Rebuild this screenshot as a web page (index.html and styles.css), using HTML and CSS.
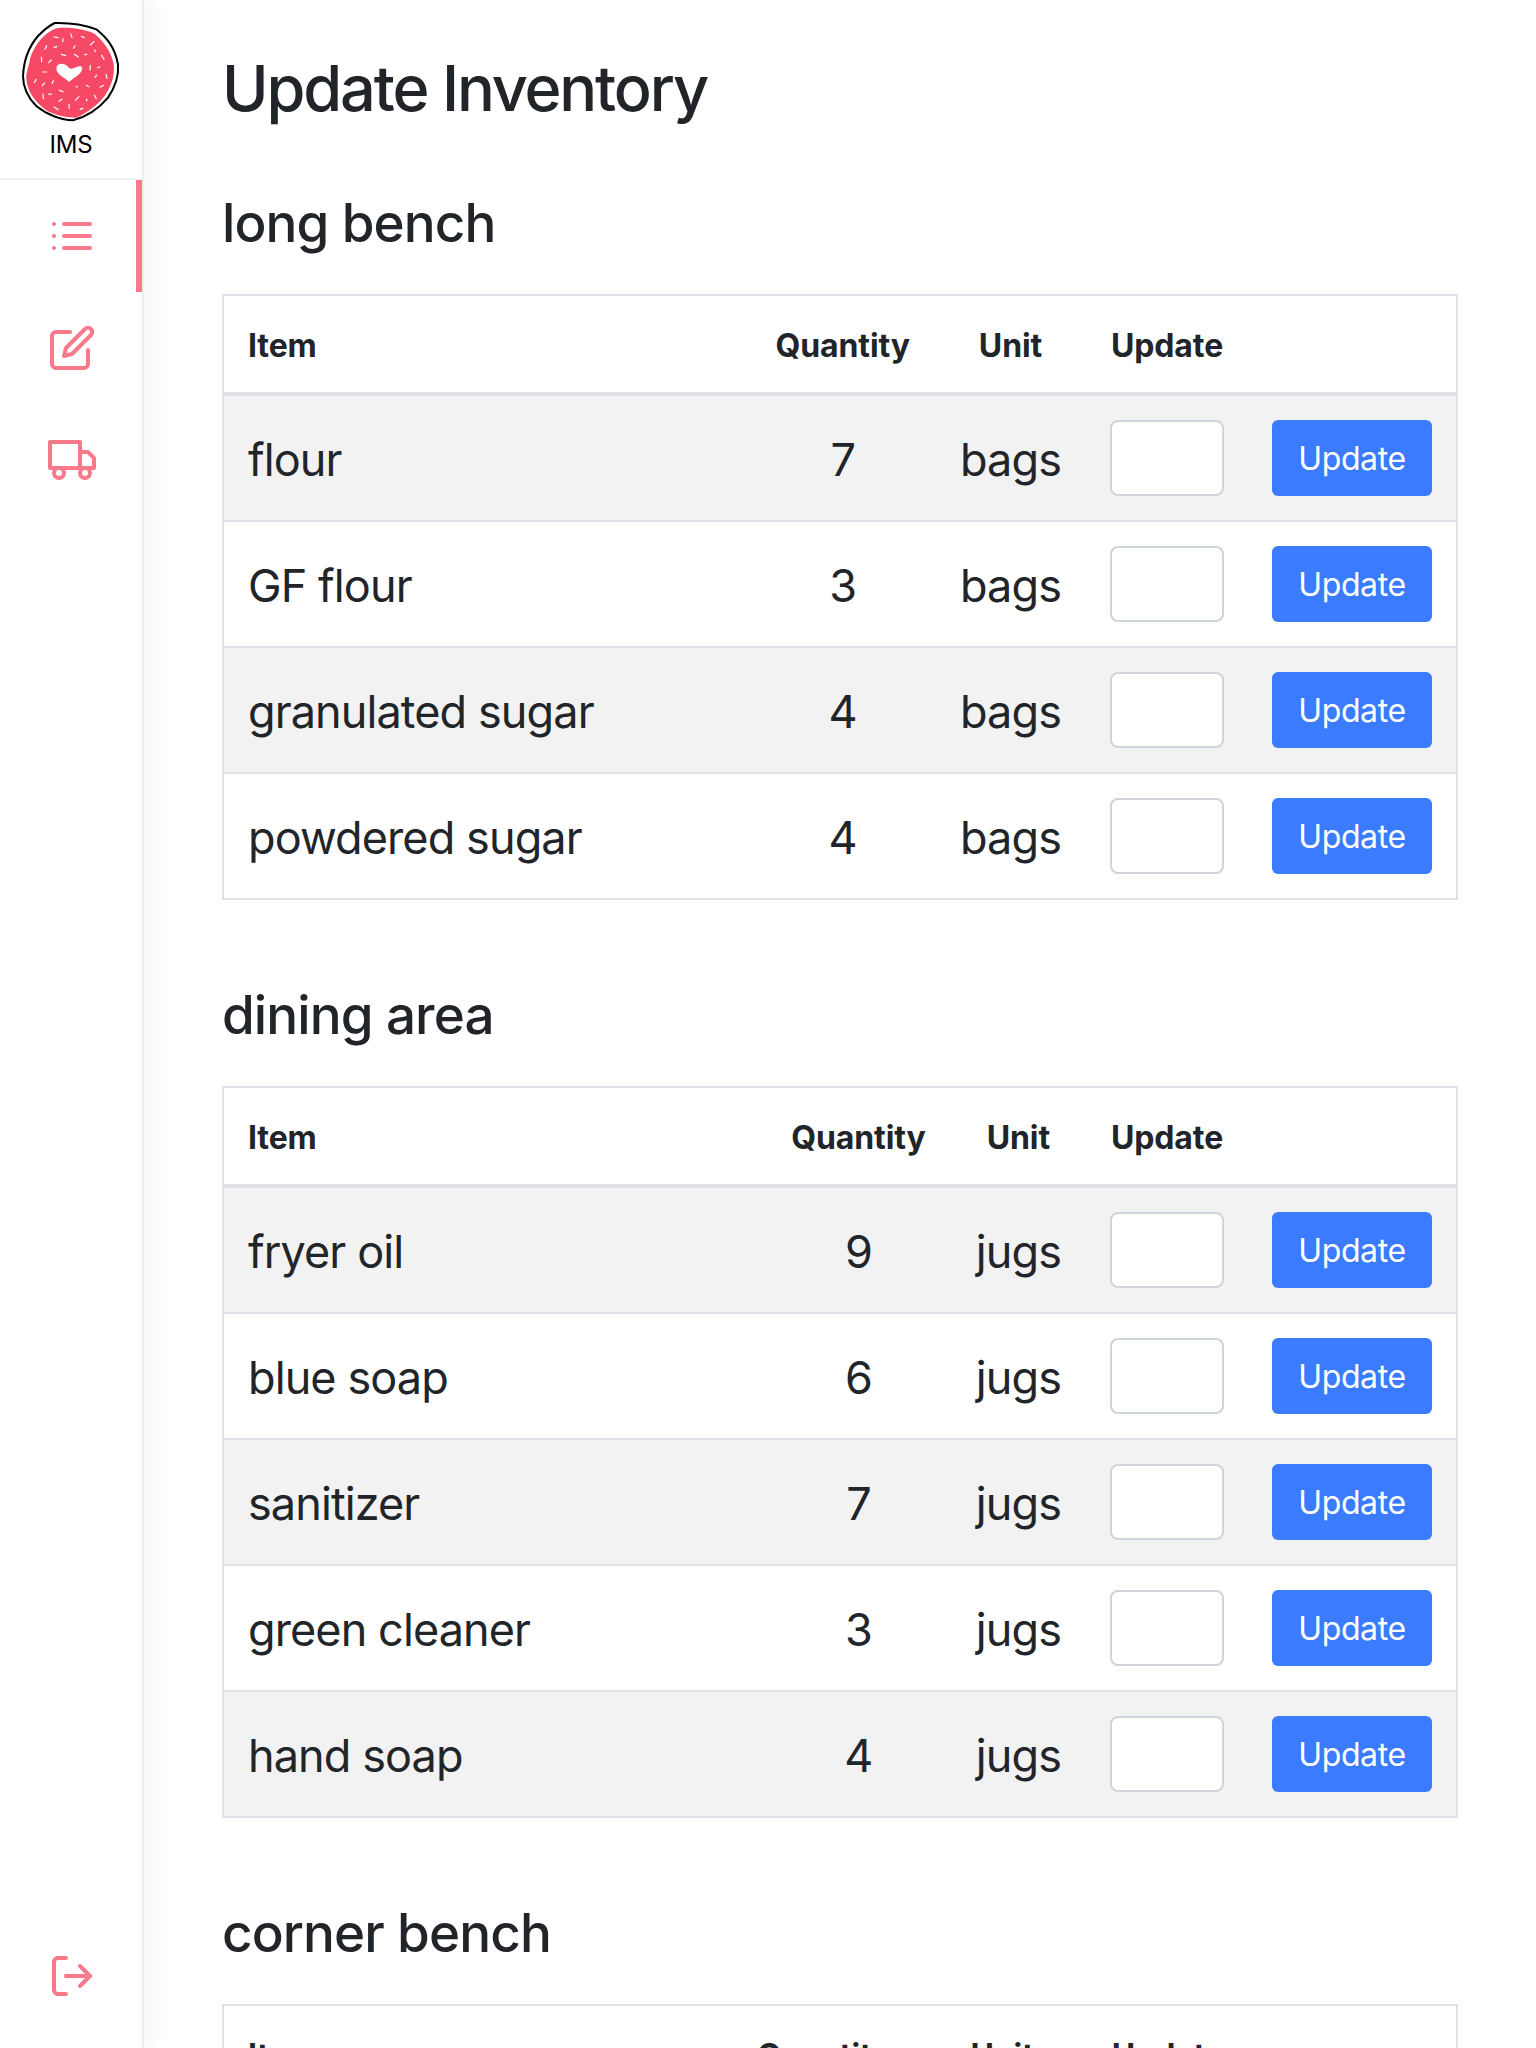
FILE: index.html
```html
<!DOCTYPE html>
<html lang="en">
<head>
    <meta charset="UTF-8">
    <meta name="viewport" content="width=device-width, initial-scale=1.0">
    <title>Update Inventory</title>
    <link rel="stylesheet" href="styles.css">
</head>
<body>
    <nav class="sidebar">
        <div class="brand">
            <svg class="logo" viewBox="64 60 300 306" xmlns="http://www.w3.org/2000/svg">
                <path class="logo-ring" d="M165 66 C200 65 250 70 290 85 C320 110 345 135 355 190 C358 225 345 260 325 290 C300 320 270 345 220 358 C185 358 140 340 110 315 C85 290 70 260 70 225 C72 180 85 140 115 105 C130 90 145 75 165 66 Z"/>
                <path class="logo-dough" d="M170 82 C200 78 250 82 285 98 C310 120 335 150 342 190 C346 225 335 255 315 285 C295 310 265 335 230 350 C205 350 165 345 135 325 C105 300 85 275 80 235 C78 215 90 190 92 170 C105 130 135 95 170 82 Z"/>
                <g class="logo-sprinkles">
                    <path d="M163 108L175 110M213 98L217 110M245 106L254 110M190 113L189 122M272 132L283 122M136 145L141 134M163 139L172 137M222 142L226 134M285 147L287 152M185 160L198 164M224 160L236 168M255 161L261 160M306 163L313 175M125 168L126 182M147 185L155 177M272 193L271 207M294 200L301 198M130 213L141 213M319 220L322 232M286 229L291 222M104 244L110 235M127 254L135 246M158 247L161 238M229 258L233 257M260 253L268 257M301 259L312 253M179 268L190 272M130 279L131 293M146 279L155 280M284 282L290 293M227 298L238 287M178 301L187 295M260 300L262 295M208 310L209 322M163 318L176 326M241 325L250 322"/>
                </g>
                <path class="logo-heart" d="M209 243 C196 230 170 222 170 201 C172 185 196 184 208 201 C218 208 232 194 243 196 C252 200 247 212 238 220 C228 228 218 234 209 243 Z"/>
            </svg>
            <span class="brand-name">IMS</span>
        </div>
        <a class="nav-item active" href="#">
            <svg class="icon" viewBox="0 0 24 24"><line x1="8" y1="6" x2="21" y2="6"/><line x1="8" y1="12" x2="21" y2="12"/><line x1="8" y1="18" x2="21" y2="18"/><line x1="3" y1="6" x2="3.01" y2="6"/><line x1="3" y1="12" x2="3.01" y2="12"/><line x1="3" y1="18" x2="3.01" y2="18"/></svg>
        </a>
        <a class="nav-item" href="#">
            <svg class="icon" viewBox="0 0 24 24"><path d="M11 4H4a2 2 0 0 0-2 2v14a2 2 0 0 0 2 2h14a2 2 0 0 0 2-2v-7"/><path d="M18.5 2.5a2.121 2.121 0 0 1 3 3L12 15l-4 1 1-4 9.5-9.5z"/></svg>
        </a>
        <a class="nav-item" href="#">
            <svg class="icon" viewBox="0 0 24 24"><rect x="1" y="3" width="15" height="13"/><polygon points="16 8 20 8 23 11 23 16 16 16 16 8"/><circle cx="5.5" cy="18.5" r="2.5"/><circle cx="18.5" cy="18.5" r="2.5"/></svg>
        </a>
        <a class="nav-item logout" href="#">
            <svg class="icon" viewBox="0 0 24 24"><path d="M9 21H5a2 2 0 0 1-2-2V5a2 2 0 0 1 2-2h4"/><polyline points="16 17 21 12 16 7"/><line x1="21" y1="12" x2="9" y2="12"/></svg>
        </a>
    </nav>

    <main class="content">
        <h1>Update Inventory</h1>

        <h2>long bench</h2>
        <table class="stock">
            <thead>
                <tr><th class="item">Item</th><th class="qty">Quantity</th><th>Unit</th><th class="field">Update</th><th></th></tr>
            </thead>
            <tbody>
                <tr><td class="item">flour</td><td class="qty">7</td><td>bags</td><td class="field"><input type="text"></td><td class="action"><button>Update</button></td></tr>
                <tr><td class="item">GF flour</td><td class="qty">3</td><td>bags</td><td class="field"><input type="text"></td><td class="action"><button>Update</button></td></tr>
                <tr><td class="item">granulated sugar</td><td class="qty">4</td><td>bags</td><td class="field"><input type="text"></td><td class="action"><button>Update</button></td></tr>
                <tr><td class="item">powdered sugar</td><td class="qty">4</td><td>bags</td><td class="field"><input type="text"></td><td class="action"><button>Update</button></td></tr>
            </tbody>
        </table>

        <h2>dining area</h2>
        <table class="stock">
            <thead>
                <tr><th class="item">Item</th><th class="qty">Quantity</th><th>Unit</th><th class="field">Update</th><th></th></tr>
            </thead>
            <tbody>
                <tr><td class="item">fryer oil</td><td class="qty">9</td><td>jugs</td><td class="field"><input type="text"></td><td class="action"><button>Update</button></td></tr>
                <tr><td class="item">blue soap</td><td class="qty">6</td><td>jugs</td><td class="field"><input type="text"></td><td class="action"><button>Update</button></td></tr>
                <tr><td class="item">sanitizer</td><td class="qty">7</td><td>jugs</td><td class="field"><input type="text"></td><td class="action"><button>Update</button></td></tr>
                <tr><td class="item">green cleaner</td><td class="qty">3</td><td>jugs</td><td class="field"><input type="text"></td><td class="action"><button>Update</button></td></tr>
                <tr><td class="item">hand soap</td><td class="qty">4</td><td>jugs</td><td class="field"><input type="text"></td><td class="action"><button>Update</button></td></tr>
            </tbody>
        </table>

        <h2>corner bench</h2>
        <table class="stock stock-corner">
            <thead>
                <tr><th class="item">Item</th><th class="qty">Quantity</th><th class="unit">Unit</th><th class="field">Update</th><th class="action"></th></tr>
            </thead>
        </table>
    </main>
</body>
</html>
```

FILE: styles.css
```css
html, body {
    height: 100%;
    margin: 0;
    overflow: hidden;
}
body {
    font-family: Inter, "Liberation Sans", sans-serif;
    color: #212529;
    background-color: #ffffff;
    display: flex;
}
.sidebar {
    width: 144px;
    box-sizing: border-box;
    flex-shrink: 0;
    height: 100%;
    display: flex;
    flex-direction: column;
    background-color: #ffffff;
    border-right: 2px solid #eeeeee;
    box-shadow: 4px 0 24px rgba(0, 0, 0, 0.05);
}
.brand {
    height: 180px;
    box-sizing: border-box;
    padding-top: 21px;
    border-bottom: 2px solid #f0f0f0;
    display: flex;
    flex-direction: column;
    align-items: center;
}
.logo {
    width: 100px;
    height: 102px;
}
.logo-ring {
    fill: #ffffff;
    stroke: #000000;
    stroke-width: 6;
}
.logo-dough {
    fill: #f64965;
}
.logo-sprinkles path {
    fill: none;
    stroke: #ffffff;
    stroke-width: 3.5;
    stroke-linecap: round;
}
.logo-heart {
    fill: #ffffff;
}
.brand-name {
    margin-top: 7px;
    font-size: 24px;
    line-height: 30px;
    color: #000000;
    letter-spacing: -0.2px;
}
.nav-item {
    height: 112px;
    box-sizing: border-box;
    padding-left: 2px;
    display: flex;
    align-items: center;
    justify-content: center;
}
.nav-item.active {
    box-shadow: inset -6px 0 0 #f87a8a;
}
.nav-item.logout {
    margin-top: auto;
    margin-bottom: 16px;
}
.icon {
    width: 48px;
    height: 48px;
    fill: none;
    stroke: #f87a8a;
    stroke-width: 2;
    stroke-linecap: round;
    stroke-linejoin: round;
}
.content {
    flex: 1;
    min-width: 0;
    padding: 49px 78px 0 78px;
}
h1 {
    margin: 0 0 65px;
    font-size: 63px;
    line-height: 78px;
    font-weight: 500;
    letter-spacing: -2.15px;
}
h2 {
    margin: 0 0 40px;
    font-size: 53px;
    line-height: 62px;
    font-weight: 500;
    letter-spacing: -0.9px;
}
.stock {
    width: 100%;
    margin-bottom: 84px;
    border-collapse: collapse;
    border: 2px solid #dee2e6;
}
.stock th, .stock td {
    padding: 26px 24px 22px;
    border: 2px solid #dee2e6;
    border-left: none;
    border-right: none;
    text-align: center;
    vertical-align: middle;
}
.stock th {
    font-size: 32px;
    font-weight: 700;
    line-height: 48px;
    letter-spacing: -0.1px;
    border-bottom-width: 4px;
}
.stock td {
    font-size: 45px;
    line-height: 48px;
    letter-spacing: -0.9px;
}
.stock .item {
    text-align: left;
    width: 100%;
}
.stock .qty {
    padding-right: 26px;
}
.stock .field {
    padding-left: 25px;
}
.stock td.field, .stock td.action {
    padding-top: 24px;
    padding-bottom: 24px;
}
.stock-corner th.unit {
    padding-left: 53px;
    padding-right: 53px;
}
.stock-corner th.action {
    padding-right: 184px;
}
.stock tbody tr:nth-child(odd) {
    background-color: #f2f2f2;
}
.field input {
    display: block;
    box-sizing: border-box;
    width: 114px;
    height: 76px;
    background-color: #ffffff;
    border: 2px solid #ced4da;
    border-radius: 8px;
}
button {
    display: block;
    width: 160px;
    height: 76px;
    border: none;
    border-radius: 6px;
    background-color: #3a7bff;
    color: #ffffff;
    font-family: inherit;
    font-size: 32px;
    letter-spacing: -0.4px;
}
```
